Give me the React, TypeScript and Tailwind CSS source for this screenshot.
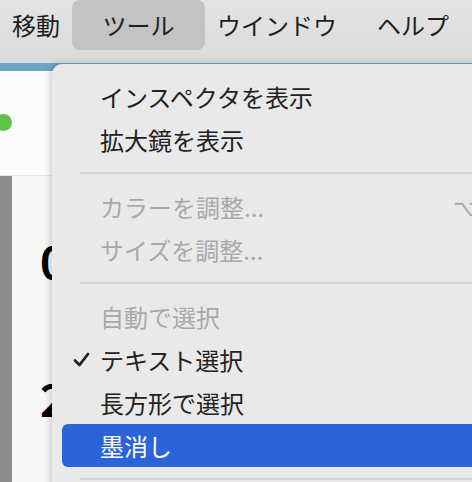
import React from 'react';

const font = { fontFamily: '"Noto Sans CJK JP", "Noto Sans", sans-serif' };

type Item = { label: string; disabled?: boolean; checked?: boolean; active?: boolean; shortcut?: string };

const groups: Item[][] = [
  [{ label: 'インスペクタを表示' }, { label: '拡大鏡を表示' }],
  [
    { label: 'カラーを調整...', disabled: true, shortcut: '⌥' },
    { label: 'サイズを調整...', disabled: true },
  ],
  [
    { label: '自動で選択', disabled: true },
    { label: 'テキスト選択', checked: true },
    { label: '長方形で選択' },
    { label: '墨消し', active: true },
  ],
];

const MenuRow: React.FC<{ item: Item }> = ({ item }) => (
  <div
    className={`relative flex items-center h-[43px] ml-[10px] rounded-l-[6px] text-[24px] ${
      item.active ? 'bg-[#2b63d9] text-white' : item.disabled ? 'text-[#a9a9a9]' : 'text-[#222222]'
    }`}
  >
    {item.checked && (
      <svg className="absolute left-[11px] top-[14px] w-[17px] h-[15px]" viewBox="0 0 17 15">
        <path d="M2 8.5 L6.5 13 L15 2" fill="none" stroke="#222" strokeWidth="2.8" strokeLinecap="round" strokeLinejoin="round" />
      </svg>
    )}
    <span className="pl-[38px] leading-none">{item.label}</span>
    {item.shortcut && (
      <span className="absolute left-[391px] text-[23px] text-[#a9a9a9] leading-none">{item.shortcut}</span>
    )}
  </div>
);

export default function App() {
  return (
    <div className="relative w-[472px] h-[482px] overflow-hidden bg-white flex flex-col" style={font}>
      {/* Menu bar */}
      <div className="h-[63px] bg-gradient-to-b from-[#e4e4e4] to-[#dadada] flex items-start text-[24px] text-[#1e1e1e]">
        <div className="h-[50px] flex items-center pl-[12px] pr-[12px]">移動</div>
        <div className="h-[50px] w-[133px] flex items-center justify-center bg-[#c3c3c3] rounded-[8px]">ツール</div>
        <div className="h-[50px] flex items-center pl-[12px]">ウインドウ</div>
        <div className="h-[50px] flex items-center pl-[40px]">ヘルプ</div>
      </div>
      <div className="h-[8px] bg-[#6ea4c2]" />

      {/* Window behind the menu */}
      <div className="flex-1 flex flex-col">
        <div className="h-[105px] bg-[#fbfbfb] border-b border-[#e6e6e6] flex items-center">
          <div className="w-[17px] h-[17px] rounded-full bg-[#5ec24a] -ml-[5px] mt-[-2px]" />
        </div>
        <div className="flex-1 flex">
          <div className="w-[12px] bg-[#8c8c8c]" />
          <div className="flex-1 bg-[#f7f7f7] pl-[28px] pt-[62px] text-[44px] font-bold text-black leading-none">
            <div>0</div>
            <div className="mt-[94px]">2</div>
          </div>
        </div>
      </div>

      {/* Dropdown menu */}
      <div className="absolute left-[52px] top-[64px] w-[440px] h-[440px] bg-[#e9e9e9] rounded-tl-[10px] shadow-[-2px_0_6px_rgba(0,0,0,0.18)] pt-[11px]">
        {groups.map((g, gi) => (
          <div key={gi}>
            {gi > 0 && (
              <div className="h-[24px] flex items-center">
                <div className="ml-[28px] flex-1 h-[2px] bg-[#d2d2d2]" />
              </div>
            )}
            {g.map(item => (
              <MenuRow key={item.label} item={item} />
            ))}
          </div>
        ))}
        <div className="h-[24px] flex items-center">
          <div className="ml-[28px] flex-1 h-[2px] bg-[#d2d2d2]" />
        </div>
      </div>
    </div>
  );
}
